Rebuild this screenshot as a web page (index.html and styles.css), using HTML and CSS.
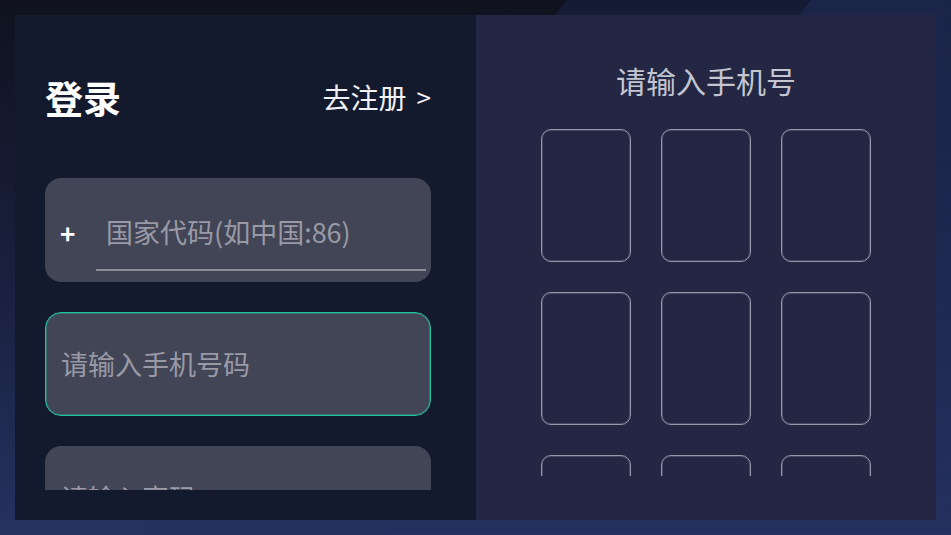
FILE: index.html
```html
<!DOCTYPE html>
<html lang="zh-CN">
<head>
<meta charset="utf-8">
<title>登录</title>
<link rel="stylesheet" href="styles.css">
</head>
<body>
<main class="card">
  <section class="login">
    <div class="login-scroll">
      <header class="login-head">
        <h1 class="login-title">登录</h1>
        <a class="register-link" href="#">去注册<span class="arrow">&gt;</span></a>
      </header>
      <div class="field field-code">
        <span class="plus">+</span>
        <div class="code-input"><span class="placeholder">国家代码(如中国:86)</span></div>
      </div>
      <div class="field field-focus">
        <span class="placeholder">请输入手机号码</span>
      </div>
      <div class="field">
        <span class="placeholder">请输入密码</span>
      </div>
    </div>
  </section>
  <section class="pad">
    <div class="pad-scroll">
      <h2 class="pad-title">请输入手机号</h2>
      <div class="pad-grid">
        <div class="pad-key"></div><div class="pad-key"></div><div class="pad-key"></div>
        <div class="pad-key"></div><div class="pad-key"></div><div class="pad-key"></div>
        <div class="pad-key"></div><div class="pad-key"></div><div class="pad-key"></div>
        <div class="pad-key"></div><div class="pad-key"></div><div class="pad-key"></div>
      </div>
    </div>
  </section>
</main>
</body>
</html>
```

FILE: styles.css
```css
html, body {
  margin: 0;
  padding: 0;
}

body {
  position: relative;
  box-sizing: border-box;
  width: 951px;
  height: 535px;
  padding: 15px;
  overflow: hidden;
  font-family: "Noto Sans CJK SC", "Noto Sans", sans-serif;
  background: linear-gradient(to bottom, #0f121e 0%, #1a2140 55%, #25315f 100%);
}

/* diagonal light bands of the backdrop, fading out toward the bottom */
body::before {
  content: "";
  position: absolute;
  inset: 0;
  background: linear-gradient(128.7deg, rgba(60, 90, 200, 0) 0 41.1%, rgba(60, 90, 200, 0.13) 41.1% 58.8%, rgba(60, 90, 200, 0.25) 58.8% 100%);
  -webkit-mask-image: linear-gradient(to bottom, #000 0%, rgba(0, 0, 0, 0.6) 50%, transparent 100%);
  mask-image: linear-gradient(to bottom, #000 0%, rgba(0, 0, 0, 0.6) 50%, transparent 100%);
}

.card {
  position: relative;
  display: flex;
  height: 505px;
}

/* left: login form */
.login {
  box-sizing: border-box;
  width: 461px;
  padding: 0 45px 30px 30px;
  background: #141a2d;
}

.login-scroll {
  height: 475px;
  overflow: hidden;
}

.login-head {
  display: flex;
  align-items: center;
  justify-content: space-between;
  height: 48px;
  margin-top: 58px;
  margin-bottom: 57px;
}

.login-title {
  margin: 0;
  font-size: 38px;
  font-weight: 700;
  line-height: 48px;
  color: #ffffff;
}

.register-link {
  display: flex;
  align-items: center;
  gap: 10px;
  font-size: 28px;
  line-height: 48px;
  color: #f2f2f4;
  text-decoration: none;
}

.arrow {
  font-size: 26px;
}

.field {
  box-sizing: border-box;
  display: flex;
  align-items: center;
  height: 104px;
  margin-bottom: 30px;
  padding-left: 16px;
  border-radius: 16px;
  background: #424555;
}

.placeholder {
  font-size: 27px;
  line-height: 36px;
  color: #999aa6;
  white-space: nowrap;
}

.field-code {
  align-items: stretch;
  padding: 16px 5px 11px 15px;
}

.plus {
  display: flex;
  align-items: center;
  width: 36px;
  font-size: 26px;
  font-weight: 700;
  color: #ffffff;
}

.code-input {
  flex: 1;
  display: flex;
  align-items: center;
  padding-left: 10px;
  border-bottom: 2px solid #8d8e98;
}

.field-focus {
  border: 1px solid #1fc3a0;
  box-shadow: inset 0 0 0 1px rgba(31, 195, 160, 0.35);
  padding-left: 15px;
}

/* right: keypad */
.pad {
  box-sizing: border-box;
  flex: 1;
  padding-bottom: 44px;
  background: #232743;
}

.pad-scroll {
  height: 461px;
  overflow: hidden;
  padding-top: 45px;
  box-sizing: border-box;
}

.pad-title {
  margin: 0;
  font-size: 30px;
  font-weight: 400;
  line-height: 40px;
  text-align: center;
  color: #c3c5d1;
}

.pad-grid {
  display: grid;
  grid-template-columns: repeat(3, 90px);
  grid-auto-rows: 133px;
  gap: 30px;
  justify-content: center;
  margin-top: 29px;
}

.pad-key {
  box-sizing: border-box;
  border: 1px solid #9598ab;
  box-shadow: inset 0 0 0 1px rgba(143, 146, 165, 0.3);
  border-radius: 10px;
}
```
